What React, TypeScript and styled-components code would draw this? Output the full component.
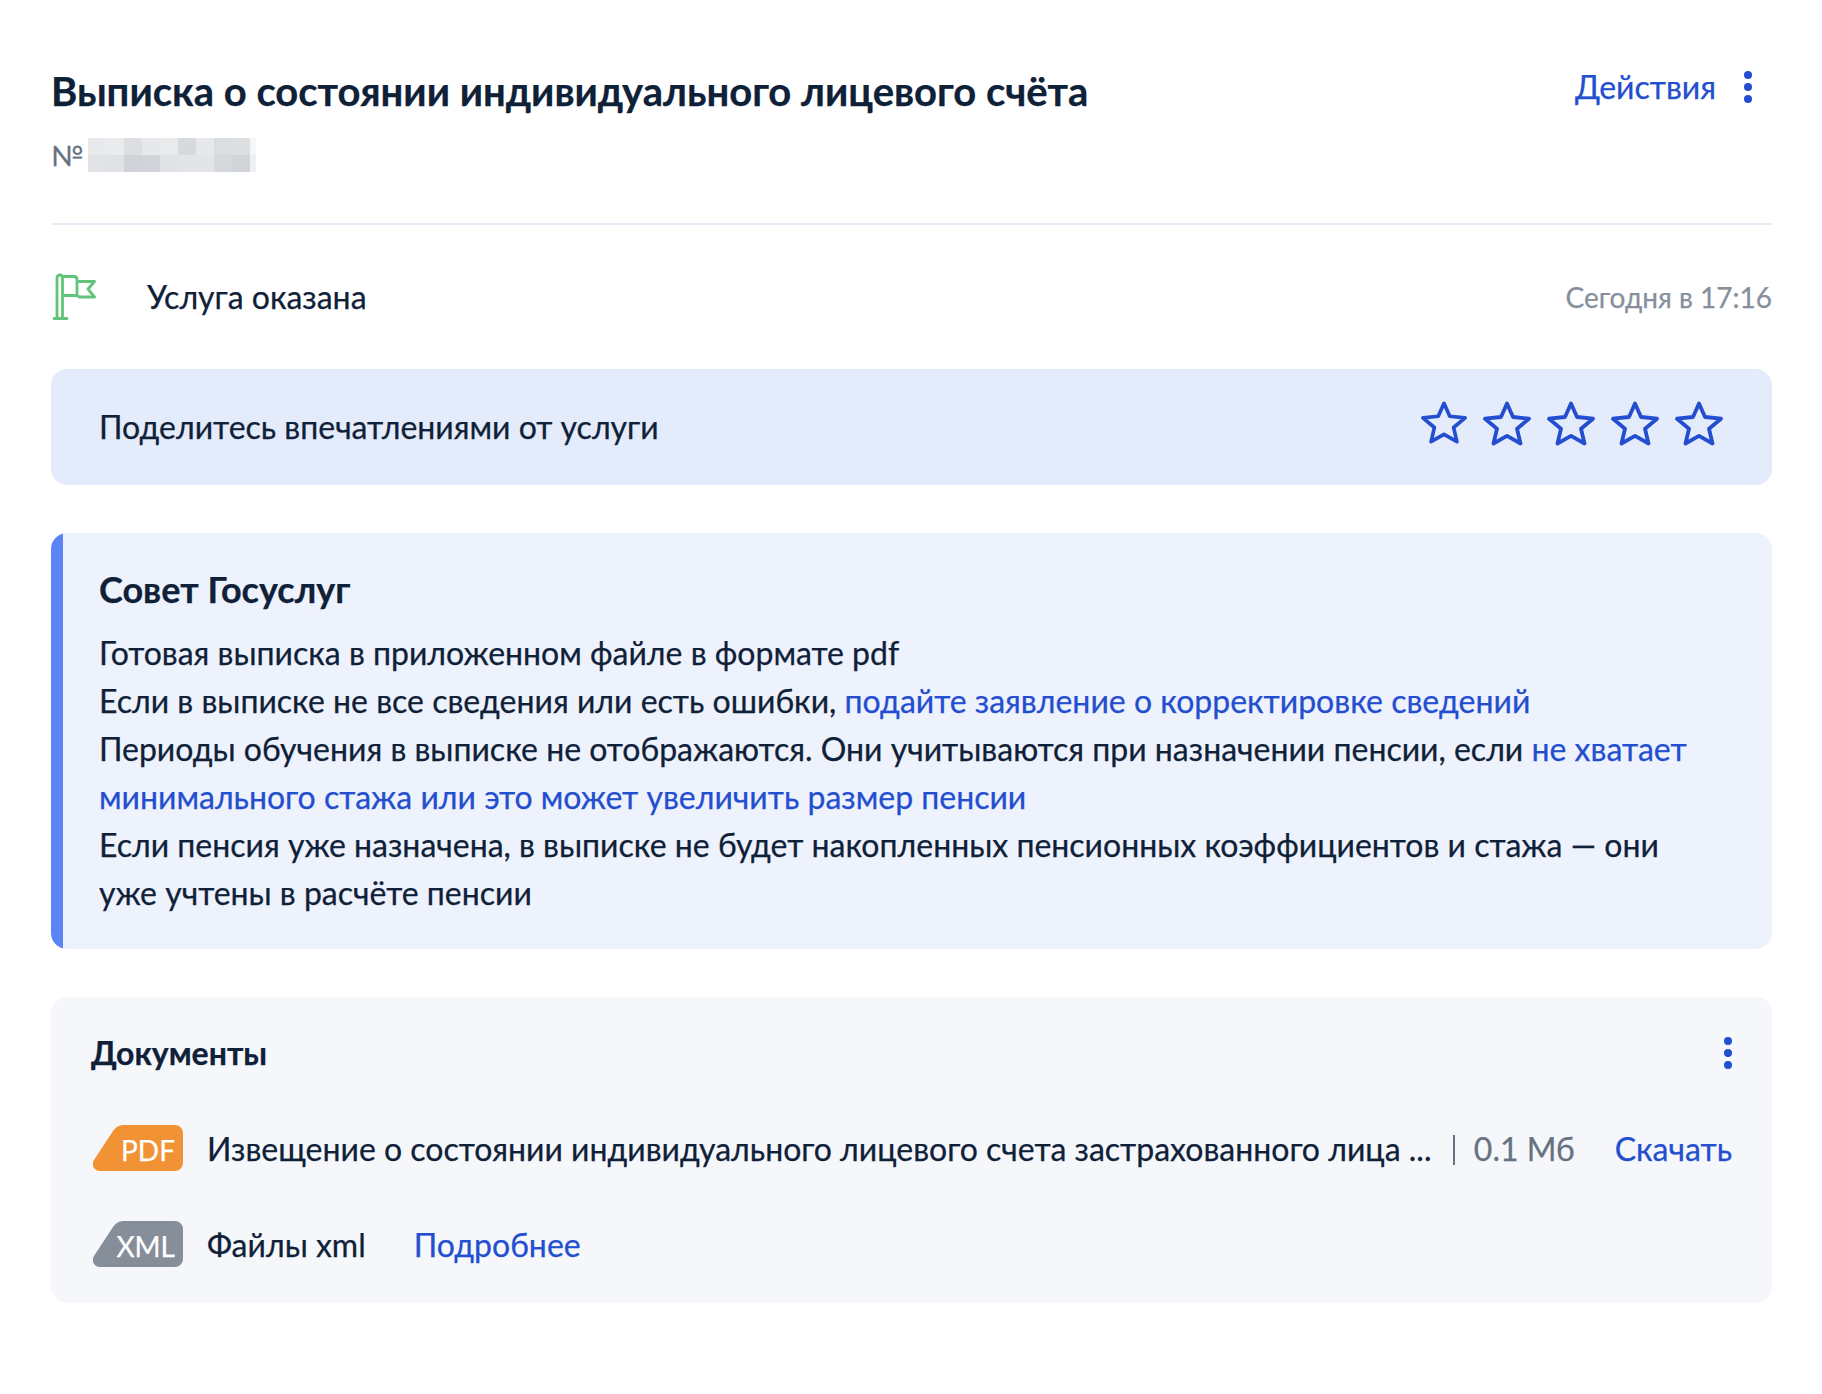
import React from 'react';
import styled, { createGlobalStyle } from 'styled-components';

const Global = createGlobalStyle`
  html, body { margin: 0; padding: 0; background: #fff; }
  body { font-family: Lato, "Noto Sans", "Liberation Sans", sans-serif; color: #0f2138; -webkit-text-stroke: 0.25px; }
`;
const Page = styled.div`
  width: 1822px; height: 1394px; box-sizing: border-box; padding: 0 50px 0 51px;
  display: flex; flex-direction: column;
`;
const Header = styled.header`
  display: flex; justify-content: space-between; align-items: flex-start;
  padding-top: 65px; height: 225px; flex: none; box-sizing: border-box;
  border-bottom: 2px solid #e6ebf7;
`;
const Title = styled.h1`
  margin: 0; font-size: 40px; line-height: 52px; font-weight: 700; color: #0f2138;
`;
const Number = styled.div`
  display: flex; align-items: center; gap: 5px; margin-top: 21px; color: #66727f; font-size: 28px; line-height: 34px;
`;
const Mask = styled.div`
  display: grid; grid-template-columns: repeat(9, 18px) 6px; grid-auto-rows: 17px;
`;
const MaskCell = styled.span<{ $c: string }>`
  background: ${p => p.$c};
`;
const Actions = styled.div`
  display: flex; align-items: center; gap: 28px; padding-right: 20px; margin-top: -2px;
`;
const Link = styled.a`
  color: #234ecf; text-decoration: none;
`;
const ActionLink = styled(Link)`
  font-size: 32px; line-height: 48px;
`;
const Dots = styled.div`
  display: flex; flex-direction: column; gap: 4px;
`;
const Dot = styled.span`
  width: 8px; height: 8px; border-radius: 50%; background: #234ecf;
`;
const Status = styled.div`
  display: flex; align-items: center; height: 144px; flex: none; box-sizing: border-box;
`;
const StatusIcon = styled.svg`
  width: 44px; height: 48px; flex: none; margin: 0 0 0 1px;
`;
const StatusText = styled.div`
  margin-left: 51px; font-size: 32px; line-height: 48px; flex: 1;
`;
const Time = styled.div`
  font-size: 28px; color: #86909c; line-height: 40px;
`;
const Rating = styled.section`
  display: flex; align-items: center; justify-content: space-between; flex: none;
  height: 116px; box-sizing: border-box; padding: 0 48px 0 48px;
  background: #e4ebfa; border-radius: 16px; font-size: 32px;
`;
const RatingText = styled.span`
  margin-top: -2px;
`;
const Stars = styled.div`
  display: flex; align-items: flex-start; gap: 14px; margin-top: -6px;
`;
const Star = styled.svg<{ $small?: boolean }>`
  width: ${p => (p.$small ? 48 : 50)}px; height: ${p => (p.$small ? 46 : 48)}px; display: block;
`;
const Tip = styled.section`
  margin-top: 48px; height: 416px; flex: none; box-sizing: border-box; padding: 32px 48px 0 48px;
  background: linear-gradient(to right, #5b85f5 12px, #eef2fc 12px); border-radius: 16px;
`;
const TipTitle = styled.h2`
  margin: 0 0 16px; font-size: 36px; line-height: 48px; font-weight: 700;
`;
const TipBody = styled.div`
  font-size: 32px; line-height: 48px;
`;
const Docs = styled.section`
  margin-top: 48px; height: 306px; flex: none; box-sizing: border-box; padding: 32px 40px 0;
  background: #f5f7fb; border-radius: 16px;
`;
const DocsHead = styled.div`
  display: flex; align-items: center; justify-content: space-between; height: 48px;
`;
const DocsTitle = styled.h3`
  margin: 0; font-size: 32px; font-weight: 700; line-height: 48px;
`;
const DocRow = styled.div`
  display: flex; align-items: center; height: 48px; margin-top: 48px; font-size: 32px; line-height: 48px;
`;
const Badge = styled.div<{ $bg: string }>`
  width: 90px; height: 46px; margin: -2px 24px 0 2px; flex: none; box-sizing: border-box;
  background: ${p => p.$bg}; color: #fff; font-size: 28px; line-height: 50px;
  text-align: right; padding-right: 8px;
  clip-path: path("M31 0H82a8 8 0 0 1 8 8V38a8 8 0 0 1-8 8H7C1 46 -2 40 1 35L20 6C23 2 26 0 31 0Z");
`;
const DocName = styled.div`
  flex: 1; white-space: nowrap; overflow: hidden; min-width: 0;
`;
const Sep = styled.span`
  width: 2px; height: 30px; flex: none; background: #66727f; margin: 2px 19px 0 15px;
`;
const Size = styled.span`
  color: #66727f; margin-right: 40px;
`;
const More = styled(Link)`
  margin-left: 48px;
`;

const cells = ['#e8e9ec','#eaebed','#dcdee2','#e7e8eb','#e9eaec','#d6d9dd','#e7e8ea','#dbdee1','#dcdfe2','#f6f6f7',
  '#e2e3e6','#e0e2e5','#cfd2d6','#d2d4d9','#e0e2e5','#e3e4e7','#e3e4e7','#d6d9dc','#d1d4d8','#f0f0f2'];

const StarIcon = ({ small }: { small?: boolean }) => (
  <Star $small={small} viewBox="0 0 50 48" fill="none">
    <path d="M25 3.5 L31 17 L47 18.700 L35 28.700 L38.500 43.500 L25 35.800 L11.500 43.500 L15 28.700 L3 18.700 L19 17 Z" stroke="#234ecf" strokeWidth="3.8" strokeLinejoin="round" />
  </Star>
);
const Kebab = () => <Dots><Dot /><Dot /><Dot /></Dots>;

export default function App() {
  return (
    <Page>
      <Global />
      <Header>
        <div>
          <Title>Выписка о состоянии индивидуального лицевого счёта</Title>
          <Number>№ <Mask>{cells.map((c, i) => <MaskCell key={i} $c={c} />)}</Mask></Number>
        </div>
        <Actions>
          <ActionLink>Действия</ActionLink>
          <Kebab />
        </Actions>
      </Header>
      <Status>
        <StatusIcon viewBox="0 0 44 48" fill="none">
          <path d="M2 45.500h13M5 45.500V5Q5 2 8 2Q10.500 2 10.500 5V45.500M10.500 3.500H22q3 0 3 3V22.500H10.500M25 8.500H42.500L36 16l6.500 8H27.500L25 22.500" stroke="#62c47a" strokeWidth="2.8" strokeLinejoin="round" strokeLinecap="round" />
        </StatusIcon>
        <StatusText>Услуга оказана</StatusText>
        <Time>Сегодня в 17:16</Time>
      </Status>
      <Rating>
        <RatingText>Поделитесь впечатлениями от услуги</RatingText>
        <Stars><StarIcon small /><StarIcon /><StarIcon /><StarIcon /><StarIcon /></Stars>
      </Rating>
      <Tip>
        <TipTitle>Совет Госуслуг</TipTitle>
        <TipBody>
          Готовая выписка в приложенном файле в формате pdf<br />
          Если в выписке не все сведения или есть ошибки, <Link>подайте заявление о корректировке сведений</Link><br />
          Периоды обучения в выписке не отображаются. Они учитываются при назначении пенсии, если <Link>не хватает минимального стажа или это может увеличить размер пенсии</Link><br />
          Если пенсия уже назначена, в выписке не будет накопленных пенсионных коэффициентов и стажа — они уже учтены в расчёте пенсии
        </TipBody>
      </Tip>
      <Docs>
        <DocsHead>
          <DocsTitle>Документы</DocsTitle>
          <Kebab />
        </DocsHead>
        <DocRow>
          <Badge $bg="#f19235">PDF</Badge>
          <DocName>Извещение о состоянии индивидуального лицевого счета застрахованного лица ...</DocName>
          <Sep />
          <Size>0.1 Мб</Size>
          <Link>Скачать</Link>
        </DocRow>
        <DocRow>
          <Badge $bg="#868e9a">XML</Badge>
          <span>Файлы xml</span>
          <More>Подробнее</More>
        </DocRow>
      </Docs>
    </Page>
  );
}
